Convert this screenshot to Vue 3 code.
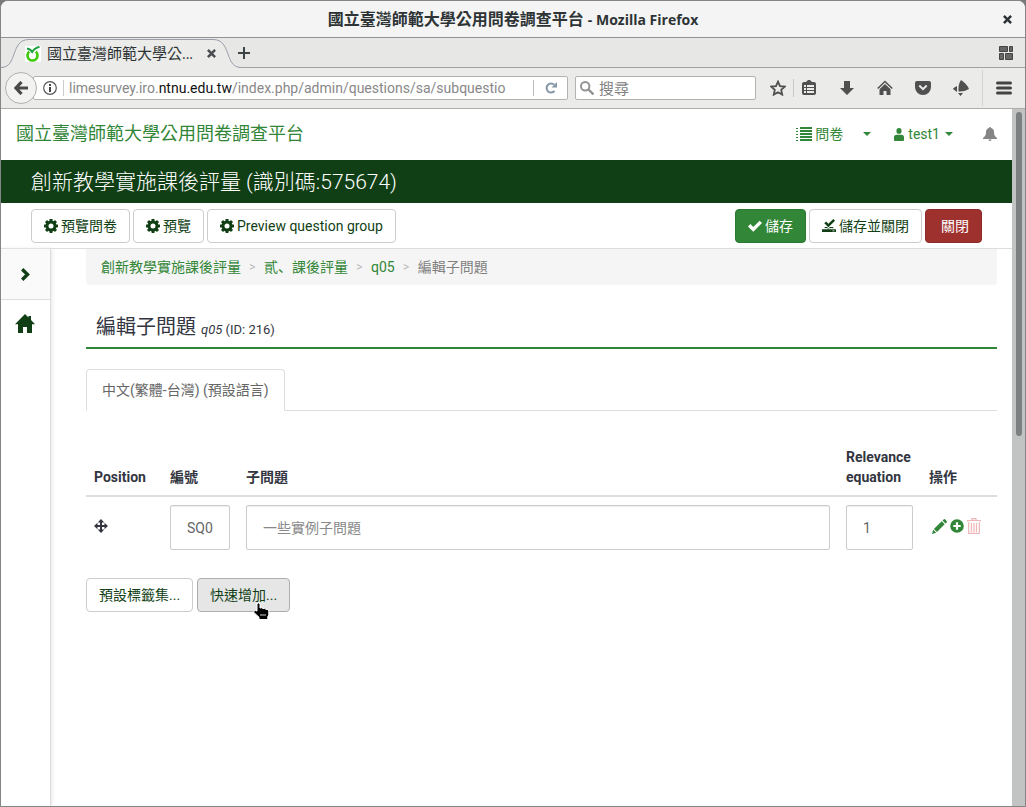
<script setup>
import { ref } from 'vue'

const siteName = '國立臺灣師範大學公用問卷調查平台'
const surveyName = '創新教學實施課後評量'
const previews = ['預覽問卷', '預覽', 'Preview question group']
const tools = [
  { id: 'clip', label: 'Bookmarks' },
  { id: 'down', label: 'Downloads' },
  { id: 'house', label: 'Home' },
  { id: 'pocket', label: 'Pocket' },
  { id: 'bird', label: 'Share' },
]
const rows = ref([{ code: 'SQ0', text: '', relevance: '1' }])
const search = ref('')
</script>

<template>
  <div class="window">
    <svg class="sprite" aria-hidden="true">
      <symbol id="gear" viewBox="0 0 14 14">
        <circle cx="7" cy="7" r="4" fill="none" stroke="currentColor" stroke-width="3" />
        <g fill="currentColor">
          <rect v-for="n in 8" :key="n" x="5.500" y="0" width="3" height="3" rx=".4" :transform="`rotate(${n * 45} 7 7)`" />
        </g>
      </symbol>
      <symbol id="list" viewBox="0 0 16 15">
        <path fill="currentColor" d="M0 1h2v1H0zM0 4h2v1H0zM0 7h2v1H0zM0 10h2v1H0zM0 13h2v1H0zM4 0h12v2H4zM4 3h12v2H4zM4 6h12v2H4zM4 9h12v2H4zM4 12h12v2H4z" />
      </symbol>
      <symbol id="user" viewBox="0 0 10 13">
        <path fill="currentColor" d="M5 0a2.6 2.9 0 0 1 0 5.800A2.600 2.900 0 0 1 5 0zM0 13V9.300c0-1.600 1-2.500 2.600-2.500h4.800c1.600 0 2.600.9 2.600 2.500V12q0 1-1 1H1q-1 0-1-1z" />
      </symbol>
      <symbol id="bell" viewBox="0 0 14 14">
        <path fill="currentColor" d="M6 1a1 1 0 0 1 2 0C10 1.500 11 3 11 5c0 3 .8 4.500 3 6v1H0v-1c2.200-1.500 3-3 3-6 0-2 1-3.500 3-4zM5.500 12.500h3a1.500 1.500 0 0 1-3 0z" />
      </symbol>
      <symbol id="check" viewBox="0 0 14 12">
        <path fill="currentColor" d="M0 6.500 2.400 4 5.300 6.900 11.600.7 14 3.100 5.300 11.800z" />
      </symbol>
      <symbol id="saved" viewBox="0 0 14 14">
        <path fill="currentColor" d="m2.300 4.300 1.800-1.800 2.300 2.300L11.300 0 13 1.700 6.400 8.200zM0 10h14v3H0zM3 8h2l1.500 1.200L8 8h3l1 1.500H2z" />
        <path fill="#fff" d="M0 9.300h4.800l1.600 1 1.600-1H14v.9H0zM10.500 11.500h2v.7h-2z" />
      </symbol>
      <symbol id="chevron" viewBox="0 0 9 13">
        <path fill="none" stroke="currentColor" stroke-width="3.400" d="m1.200 1.200 5.300 5.300-5.300 5.300" />
      </symbol>
      <symbol id="home" viewBox="0 0 20 19">
        <path fill="currentColor" d="M10 0l3.500 3.500V2H16v4l4 4.200h-3V19h-5v-6H8v6H3v-8.800H0z" />
      </symbol>
      <symbol id="move" viewBox="0 0 14 14">
        <path fill="currentColor" d="m7 0 3.300 3.500H8v2.500h2.500V3.700L14 7l-3.500 3.300V8H8v2.500h2.300L7 14l-3.300-3.500H6V8H3.500v2.300L0 7l3.500-3.300V6H6V3.500H3.700z" />
      </symbol>
      <symbol id="pencil" viewBox="0 0 15 15">
        <path fill="currentColor" d="M0 15 1.200 10.800 4.200 13.800zM1.900 9.900 9.700 2.300l3 3L5 13.100zM10.500 1.500 11.600.5q.8-.8 1.600 0l1.400 1.400q.7.8 0 1.500l-1.100 1.100z" />
      </symbol>
      <symbol id="plus" viewBox="0 0 14 14">
        <path fill="currentColor" fill-rule="evenodd" d="M7 .2a6.800 6.800 0 1 1 0 13.600A6.800 6.800 0 0 1 7 .2zM5.900 3.300v2.600H3.300v2.200h2.600v2.600h2.200V8.100h2.600V5.900H8.100V3.300z" />
      </symbol>
      <symbol id="trash" viewBox="0 0 14 16">
        <path fill="none" stroke="currentColor" stroke-width="1.200" d="M.5 3.500v-1h13v1M5 2V.7h4V2M1.700 4v11.300h10.600V4M4.500 5v9M7 5v9M9.500 5v9" />
      </symbol>
      <symbol id="star" viewBox="0 0 16 16">
        <path fill="none" stroke="currentColor" stroke-width="1.800" d="m8 1.600 2 4.500 4.800.5-3.600 3.200 1 4.800L8 12.200l-4.200 2.400 1-4.800L1.200 6.600 6 6.100z" />
      </symbol>
      <symbol id="clip" viewBox="0 0 16 16">
        <path fill="currentColor" fill-rule="evenodd" d="M3 2h2l2-2h2l2 2h2q2 0 2 2v9q0 2-2 2H3q-2 0-2-2V4q0-2 2-2zM3 5v2h2V5zM6 5v2h7V5zM3 8v2h2V8zM6 8v2h7V8zM3 11v2h2v-2zM6 11v2h7v-2z" />
      </symbol>
      <symbol id="down" viewBox="0 0 16 16">
        <path fill="currentColor" d="M5 1h6v7h4l-7 7-7-7h4z" />
      </symbol>
      <symbol id="house" viewBox="0 0 16 16">
        <path fill="none" stroke="currentColor" stroke-width="1.500" d="m.7 8.500 7.300-7 7.300 7" />
        <path fill="currentColor" d="m8 4 5.500 5.200V15H9.500v-4h-3v4H2.500V9.200z" />
      </symbol>
      <symbol id="pocket" viewBox="0 0 16 16">
        <path fill="currentColor" d="M2 1h12q2 0 2 2v4A8 8 0 0 1 0 7V3q0-2 2-2z" />
        <path fill="none" stroke="#ebebe9" stroke-width="2" d="m4.300 5.500 3.700 3.600 3.700-3.600" />
      </symbol>
      <symbol id="bird" viewBox="0 0 16 16">
        <path fill="currentColor" d="M8 0q6 4 8 9-5 3-10.500 2.500Q5 4 8 0zM4 6v6L0 9q0-1 4-3zM5 13h5l-2.500 3z" />
      </symbol>
      <symbol id="cross" viewBox="0 0 8 8">
        <path fill="none" stroke="currentColor" stroke-width="2.200" d="m.8.8 6.400 6.400M7.200.8.8 7.200" />
      </symbol>
    </svg>

    <header class="titlebar">
      <span class="title">{{ siteName }} <b class="latin">- Mozilla Firefox</b></span>
      <button class="plain close-window" aria-label="Close window"><svg width="9" height="9"><use href="#cross" /></svg></button>
    </header>

    <div class="tabstrip">
      <div class="tab">
        <svg class="edge left" width="28" height="30" viewBox="0 0 28 30">
          <path fill="#ebebe9" d="M0 29.500C16 29.500 11 1.500 28 1.500V30H0z" />
          <path fill="none" stroke="#9a9fab" d="M0 29.500C17 29.500 9 1.500 28 1.500" />
        </svg>
        <div class="tab-middle">
          <svg class="favicon" width="16" height="16" viewBox="0 0 16 16">
            <path fill="#fff" d="M0 0h16v16H0z" />
            <circle cx="7.500" cy="9.500" r="5" fill="none" stroke="#42c80d" stroke-width="2.700" />
            <path fill="#fff" d="M4 2h7v4H4z" />
            <path fill="none" stroke="#189e3c" stroke-width="1.800" d="M2 2.500Q5.500 3 7.200 6 9.500 2 14.500.8" />
          </svg>
          <span class="tab-label">國立臺灣師範大學公<span class="latin">...</span></span>
          <button class="plain tab-close" aria-label="Close tab"><svg width="9" height="9"><use href="#cross" /></svg></button>
        </div>
        <svg class="edge right" width="28" height="30" viewBox="0 0 28 30">
          <path fill="#ebebe9" d="M28 29.500C12 29.500 17 1.500 0 1.500V30h28z" />
          <path fill="none" stroke="#9a9fab" d="M28 29.500C11 29.500 19 1.500 0 1.500" />
        </svg>
      </div>
      <button class="plain new-tab" aria-label="New tab">
        <svg width="12" height="12" viewBox="0 0 12 12"><path stroke="#3e4345" stroke-width="2" d="M6 0v12M0 6h12" /></svg>
      </button>
      <button class="plain groups" aria-label="Tab groups">
        <svg width="14" height="14" viewBox="0 0 14 14"><path fill="#666" stroke="#444" d="M.5.500h8v5h-8zM10.500.5h3v5h-3zM.5 7.500h4v6h-4zM6.500 7.500h7v6h-7z" /></svg>
      </button>
    </div>

    <nav class="toolbar">
      <button class="plain back" aria-label="Back">
        <svg width="14" height="14" viewBox="0 0 14 14"><path fill="none" stroke="#4a4a4a" stroke-width="3.200" d="M7.500 1 2 7l5.500 6M2.500 7H14" /></svg>
      </button>
      <div class="urlbar">
        <svg width="14" height="14" viewBox="0 0 14 14"><circle cx="7" cy="7" r="6.300" fill="none" stroke="#555" stroke-width="1.200" /><path fill="#444" d="M6 3h2v2H6zM6 6h2v5H6z" /></svg>
        <span class="url" role="textbox" aria-label="Address" contenteditable="true">limesurvey.iro.<span class="domain">ntnu.edu.tw</span>/index.php/admin/questions/sa/subquestio</span>
        <button class="plain reload" aria-label="Reload">
          <svg width="12" height="12" viewBox="0 0 12 12"><path fill="none" stroke="#8796a8" stroke-width="2" d="M9.500 9A4.500 4.500 0 1 1 9.200 2.800" /><path fill="#8796a8" d="M12 0v5.500H6.500z" /></svg>
        </button>
      </div>
      <label class="search">
        <svg width="14" height="14" viewBox="0 0 14 14"><circle cx="5.200" cy="5.200" r="4.200" fill="none" stroke="#929292" stroke-width="2" /><path stroke="#929292" stroke-width="2.400" d="m8.500 8.500 5 5" /></svg>
        <input v-model="search" aria-label="搜尋" placeholder="搜尋" />
      </label>
      <button class="plain tool star" aria-label="Bookmark page"><svg width="16" height="16"><use href="#star" /></svg></button>
      <button v-for="t in tools" :key="t.id" class="plain tool" :aria-label="t.label"><svg width="16" height="16"><use :href="'#' + t.id" /></svg></button>
      <button class="plain menu" aria-label="Menu">
        <svg width="16" height="14" viewBox="0 0 16 14"><path stroke="#444" stroke-width="3" stroke-linecap="round" d="M1.500 2h13M1.500 7h13M1.500 12h13" /></svg>
      </button>
    </nav>

    <div class="viewport">
      <div class="page">
        <header class="navbar">
          <a href="#" class="brand">{{ siteName }}</a>
          <a href="#" class="surveys"><svg width="16" height="15"><use href="#list" /></svg>問卷</a>
          <a href="#" class="drop" aria-label="問卷"><i class="caret"></i></a>
          <a href="#" class="account"><svg width="10" height="13"><use href="#user" /></svg>test1<i class="caret"></i></a>
          <a href="#" class="bell" aria-label="Notifications"><svg width="14" height="14"><use href="#bell" /></svg></a>
        </header>

        <h1 class="survey-title">{{ surveyName }} (識別碼:575674)</h1>

        <div class="actions">
          <button v-for="p in previews" :key="p" class="btn"><svg width="14" height="14"><use href="#gear" /></svg>{{ p }}</button>
          <span class="spacer"></span>
          <button class="btn save"><svg width="14" height="12"><use href="#check" /></svg>儲存</button>
          <button class="btn"><svg width="14" height="14"><use href="#saved" /></svg>儲存並關閉</button>
          <button class="btn close">關閉</button>
        </div>

        <div class="body">
          <aside class="sidebar">
            <button class="plain expand" aria-label="Expand"><svg width="9" height="13"><use href="#chevron" /></svg></button>
            <a href="#" class="home" aria-label="Home"><svg width="20" height="19"><use href="#home" /></svg></a>
          </aside>
          <main class="content">
            <nav class="crumbs">
              <a href="#">{{ surveyName }}</a><i>&gt;</i><a href="#">貳<span class="comma">、</span>課後評量</a><i>&gt;</i><a href="#">q05</a><i>&gt;</i><span>編輯子問題</span>
            </nav>
            <h2 class="heading">編輯子問題 <small><em>q05</em> (ID: 216)</small></h2>
            <div class="tabs"><a href="#" class="lang">中文(繁體-台灣) (預設語言)</a></div>

            <table>
              <colgroup><col class="narrow" /><col class="narrow" /><col /><col class="rel" /><col class="narrow" /></colgroup>
              <thead>
                <tr><th>Position</th><th>編號</th><th>子問題</th><th>Relevance equation</th><th>操作</th></tr>
              </thead>
              <tbody>
                <tr v-for="r in rows" :key="r.code">
                  <td><svg class="move" width="14" height="14"><use href="#move" /></svg></td>
                  <td><input v-model="r.code" class="field" aria-label="編號" /></td>
                  <td><input v-model="r.text" class="field" aria-label="子問題" placeholder="一些實例子問題" /></td>
                  <td><input v-model="r.relevance" class="field" aria-label="Relevance equation" /></td>
                  <td>
                    <div class="ops">
                      <button class="plain" aria-label="Edit"><svg width="15" height="15"><use href="#pencil" /></svg></button>
                      <button class="plain" aria-label="Add"><svg width="14" height="14"><use href="#plus" /></svg></button>
                      <button class="plain remove" aria-label="Delete"><svg width="14" height="16"><use href="#trash" /></svg></button>
                    </div>
                  </td>
                </tr>
              </tbody>
            </table>

            <div class="bottom">
              <button class="btn">預設標籤集...</button>
              <button class="btn hovered">快速增加...
                <svg class="pointer" width="17" height="18" viewBox="0 0 17 18">
                  <path fill="#000" stroke="#fff" d="M4 1.800q1.500-1.800 3 0V6q2-.8 3 .5 2-.5 3 .8Q15.500 7 15.800 9v4l-1 1.500v3H6v-2.300L.8 10.500Q1 7.500 4 9z" />
                  <path stroke="#fff" stroke-width=".8" d="M8 12v2M10 12v2M12 12v2" />
                </svg>
              </button>
            </div>
          </main>
        </div>
      </div>
      <div class="scrollbar"><div class="thumb"></div></div>
    </div>
  </div>
</template>

<style>
body {
  background: #77797a;
}
</style>

<style scoped>
* {
  box-sizing: border-box;
}
.window {
  min-height: 100vh;
  display: flex;
  flex-direction: column;
  border: 1px solid #858585;
  border-radius: 8px 8px 0 0;
  overflow: hidden;
  background: #ebebe9;
  font: 14px/20px Roboto, "Noto Sans CJK TC", sans-serif;
  color: #333641;
}
.sprite {
  position: absolute;
  width: 0;
  height: 0;
}
svg {
  flex: none;
}
.plain {
  display: flex;
  align-items: center;
  justify-content: center;
  padding: 0;
  border: 0;
  background: none;
  color: inherit;
}
a {
  color: #328637;
  text-decoration: none;
}
.titlebar {
  display: flex;
  align-items: center;
  height: 37px;
  padding: 0 13px 0 22px;
  background: #f4f4f4;
  border-bottom: 1px solid #929292;
  color: #2e3436;
  font-family: "Open Sans", "Noto Sans CJK TC", sans-serif;
}
.title {
  flex: 1;
  text-align: center;
  font-size: 16px;
  font-weight: bold;
}
.latin {
  font-size: 14px;
}
.title .latin {
  font-weight: 700;
}
.tabstrip {
  display: flex;
  height: 30px;
  background: #e7e7e5;
  box-shadow: inset 0 -1px #a2a3a5;
  color: #4a4d50;
  font-family: "Open Sans", "Noto Sans CJK TC", sans-serif;
}
.tab {
  position: relative;
  width: 240px;
  padding: 0 28px 0 24px;
}
.edge {
  position: absolute;
  top: 0;
}
.left {
  left: 0;
}
.right {
  right: 0;
}
.tab-middle {
  position: relative;
  display: flex;
  align-items: center;
  height: 30px;
  margin-left: 4px;
  border-top: 1px solid #e7e7e5;
  background: #ebebe9;
  box-shadow: inset 0 1px #9a9fab;
}
.favicon {
  margin-left: -4px;
  z-index: 1;
}
.tab-label {
  flex: 1;
  margin-left: 6px;
  font-size: 15px;
  color: #2e3436;
  white-space: nowrap;
}
.tab-close {
  margin-right: -3px;
  z-index: 1;
}
.new-tab {
  width: 12px;
  margin-left: -3px;
}
.groups {
  margin-left: auto;
  margin-right: 12px;
}
.toolbar {
  display: flex;
  align-items: center;
  height: 41px;
  padding: 0 13px 0 4px;
  background: #ebebe9;
  border-bottom: 1px solid #adaeac;
  color: #505050;
}
.back {
  z-index: 1;
  width: 32px;
  height: 32px;
  border: 1px solid #b0b0ae;
  border-radius: 50%;
  background: #f3f3f2;
}
.urlbar {
  flex: 1;
  min-width: 0;
  display: flex;
  align-items: center;
  height: 24px;
  margin-left: -4px;
  padding-left: 9px;
  background: #fff;
  border: 1px solid #b3b4b0;
  border-radius: 2px;
}
.url {
  flex: 1;
  min-width: 0;
  margin-left: 6px;
  padding-left: 5px;
  border-left: 1px solid #ccc;
  font-size: 14px;
  line-height: 16px;
  color: #888;
  white-space: nowrap;
}
.domain {
  color: #111;
}
.reload {
  width: 34px;
  height: 16px;
  border-left: 1px solid #bbb;
}
.search {
  display: flex;
  align-items: center;
  gap: 5px;
  width: 181px;
  height: 24px;
  margin-left: 7px;
  padding: 0 4px;
  background: #fff;
  border: 1px solid #b3b4b0;
  border-radius: 2px;
}
.search input {
  flex: 1;
  min-width: 0;
  padding: 0;
  border: 0;
  outline: 0;
  background: none;
  font: 15px/20px "Open Sans", "Noto Sans CJK TC", sans-serif;
}
.search input::placeholder {
  color: #808080;
}
.tool {
  width: 38px;
  height: 24px;
}
.star {
  justify-content: flex-start;
  width: 24px;
  height: 18px;
  margin: 0 -4px 0 14px;
  border-right: 1px solid #c8c8c6;
}
.menu {
  width: 30px;
  height: 36px;
  margin-left: 2px;
  justify-content: flex-end;
  border-left: 1px solid #d2d2d0;
}
.viewport {
  flex: 1;
  display: flex;
}
.page {
  flex: 1;
  min-width: 0;
  display: flex;
  flex-direction: column;
  background: #fff;
}
.scrollbar {
  width: 13px;
  padding: 3px 3px 0 4px;
  background: #c2c4c4;
}
.thumb {
  height: 324px;
  border-radius: 3px;
  background: #7c8080;
}
.navbar {
  display: flex;
  align-items: center;
  height: 51px;
  padding: 0 15px 1px;
}
.brand {
  font-size: 18px;
  margin-right: auto;
}
.surveys,
.account {
  display: flex;
  align-items: center;
  gap: 3px;
}
.drop {
  margin: 0 23px 0 20px;
}
.account {
  gap: 4px;
}
.caret {
  display: block;
  border: 4px solid transparent;
  border-top-color: currentColor;
  border-bottom: 0;
}
.account .caret {
  margin-left: 1px;
}
.bell {
  display: flex;
  margin-left: 30px;
  color: #858585;
}
.survey-title {
  margin: 0;
  padding: 1px 30px 0;
  background: #113f15;
  color: #fff;
  font-size: 21px;
  font-weight: 300;
  line-height: 42px;
}
.actions {
  display: flex;
  gap: 3px;
  padding: 6px 30px 5px;
  border-bottom: 1px solid #ddd;
}
.spacer {
  flex: 1;
}
.btn {
  position: relative;
  display: flex;
  align-items: center;
  gap: 3px;
  height: 34px;
  padding: 0 12px;
  border: 1px solid #ccc;
  border-radius: 4px;
  background: #fff;
  color: #113f15;
  font: 14px/20px Roboto, "Noto Sans CJK TC", sans-serif;
  white-space: nowrap;
}
.save {
  background: #328637;
  border-color: #2c7731;
  color: #fff;
}
.close {
  padding-left: 15px;
  background: #9e302e;
  border-color: #8c2b29;
  color: #fff;
}
.body {
  flex: 1;
  display: flex;
}
.sidebar {
  width: 50px;
  border-right: 1px solid #ddd;
  box-shadow: 1px 0 4px #e8e4e4;
}
.expand {
  width: 100%;
  height: 51px;
  background: #fafafa;
  border-bottom: 1px solid #ddd;
  color: #113f15;
}
.home {
  display: flex;
  justify-content: center;
  padding: 14px 2px 0 0;
  color: #113f15;
}
.content {
  flex: 1;
  min-width: 0;
  padding: 0 15px 0 35px;
}
.crumbs {
  display: flex;
  padding: 8px 15px;
  border-radius: 0 0 4px 4px;
  background: #f5f5f5;
  color: #808080;
}
.crumbs i {
  width: 23px;
  text-align: center;
  font-style: normal;
  font-size: 12px;
  color: #bbb;
}
.comma {
  font-family: "Noto Sans CJK SC", sans-serif;
  line-height: 1;
}
.heading {
  margin: 31px 0 20px;
  padding: 0 10px 6px;
  border-bottom: 2px solid #328637;
  font-size: 20px;
  font-weight: 400;
  line-height: 22px;
}
.heading small {
  font-size: 13px;
}
.tabs {
  display: flex;
  height: 42px;
  border-bottom: 1px solid #ddd;
}
.lang {
  height: 42px;
  padding: 10px 15px;
  border: 1px solid #ddd;
  border-bottom-color: #fff;
  border-radius: 4px 4px 0 0;
  color: #666;
}
table {
  width: 100%;
  margin-top: 28px;
  border-collapse: separate;
  border-spacing: 0;
  table-layout: fixed;
}
.narrow {
  width: 76px;
}
.rel {
  width: 83px;
}
th {
  padding: 8px;
  border-bottom: 2px solid #ddd;
  text-align: left;
  vertical-align: bottom;
  font-weight: bold;
}
th:first-child {
  white-space: nowrap;
}
td {
  padding: 8px;
  vertical-align: top;
}
.move {
  display: block;
  margin-top: 14px;
}
.field {
  display: block;
  width: 100%;
  height: 45px;
  padding: 0 16px;
  border: 1px solid #ccc;
  border-radius: 2px;
  box-shadow: inset 0 1px 1px #eee;
  background: #fff;
  color: #666;
  font: 14px/20px Roboto, "Noto Sans CJK TC", sans-serif;
}
.field::placeholder {
  color: #888;
}
.ops {
  display: flex;
  align-items: center;
  gap: 3px;
  margin: 13px 0 0 3px;
  color: #328637;
}
.remove {
  color: #edb5b5;
}
.bottom {
  display: flex;
  gap: 4px;
  margin-top: 20px;
}
.hovered {
  background: #e6e6e6;
  border-color: #adadad;
}
.pointer {
  position: absolute;
  left: 55px;
  top: 23px;
}
</style>
